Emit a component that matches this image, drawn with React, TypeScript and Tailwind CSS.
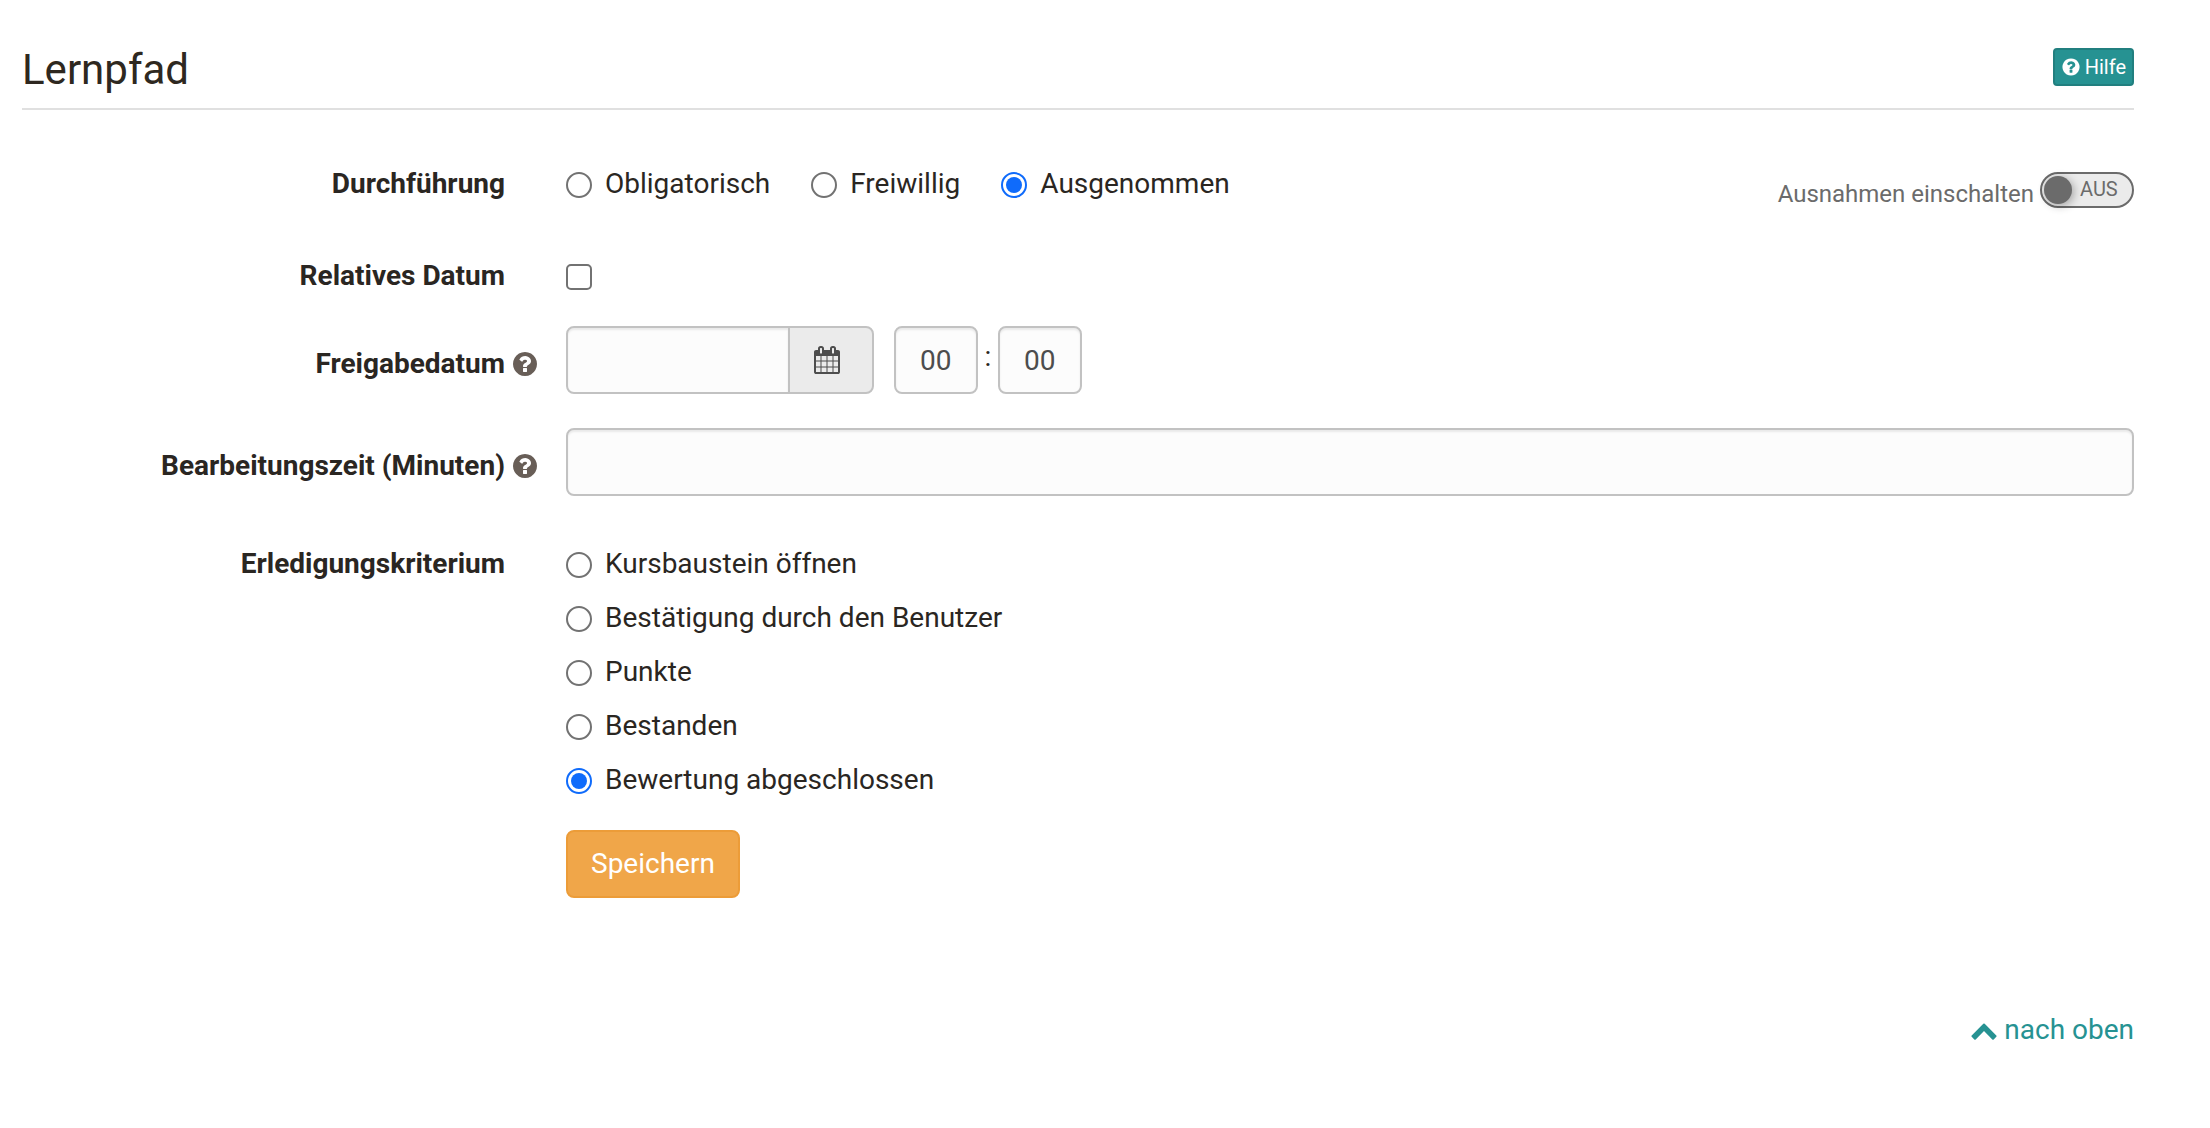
import { useState, type ReactNode } from "react";

const ICONS = {
  question:
    "M1024 1376v-192q0-14-9-23t-23-9h-192q-14 0-23 9t-9 23v192q0 14 9 23t23 9h192q14 0 23-9t9-23zm256-672q0-88-55.5-163t-138.5-116-170-41q-243 0-371 213-15 24 8 42l132 100q7 6 19 6 16 0 25-12 53-68 86-92 34-24 86-24 48 0 85.5 26t37.5 59q0 38-20 61t-68 45q-63 28-115.5 86.5t-52.5 125.5v36q0 14 9 23t23 9h192q14 0 23-9t9-23q0-19 21.5-49.5t54.5-49.5q32-18 49-28.5t46-35 44.500-48 28-60.500 12.500-81zm384 192q0 209-103 385.500t-279.500 279.500-385.500 103-385.500-103-279.500-279.500-103-385.500 103-385.500 279.500-279.500 385.500-103 385.500 103 279.500 279.500 103 385.500z",
  calendar:
    "M192 1664h288v-288h-288v288zm352 0h320v-288h-320v288zm-352-352h288v-320h-288v320zm352 0h320v-320h-320v320zm-352-384h288v-288h-288v288zm736 736h320v-288h-320v288zm-384-736h320v-288h-320v288zm768 736h288v-288h-288v288zm-384-352h320v-320h-320v320zm-352-864v-288q0-13-9.5-22.5t-22.5-9.5h-64q-13 0-22.500 9.500t-9.500 22.500v288q0 13 9.500 22.500t22.500 9.500h64q13 0 22.500-9.500t9.500-22.500zm736 864h288v-320h-288v320zm-384-384h320v-288h-320v288zm384 0h288v-288h-288v288zm32-480v-288q0-13-9.500-22.500t-22.500-9.500h-64q-13 0-22.500 9.500t-9.500 22.500v288q0 13 9.500 22.500t22.500 9.500h64q13 0 22.500-9.500t9.500-22.500zm384-64v1280q0 52-38 90t-90 38h-1408q-52 0-90-38t-38-90v-1280q0-52 38-90t90-38h128v-96q0-66 47-113t113-47h64q66 0 113 47t47 113v96h384v-96q0-66 47-113t113-47h64q66 0 113 47t47 113v96h128q52 0 90 38t38 90z",
  chevronUp:
    "M1683 1331l-166 165q-19 19-45 19t-45-19l-531-531-531 531q-19 19-45 19t-45-19l-166-165q-19-19-19-45.500t19-45.500l742-741q19-19 45-19t45 19l742 741q19 19 19 45.500t-19 45.500z",
};

function Icon({ name, className }: { name: keyof typeof ICONS; className: string }) {
  return (
    <svg viewBox="0 0 1792 1792" fill="currentColor" aria-hidden="true" className={className}>
      <path d={ICONS[name]} />
    </svg>
  );
}

const BOX =
  "h-[68px] rounded-lg border-2 border-[#c2c2c2] bg-[#fcfcfc] px-6 text-[#4d4d4d] shadow-[inset_0_2px_2px_rgba(0,0,0,0.075)] outline-none";

function Row({
  label,
  htmlFor,
  id,
  help,
  offset = "",
  className = "",
  children,
}: {
  label: string;
  htmlFor?: string;
  id?: string;
  help?: boolean;
  offset?: string;
  className?: string;
  children: ReactNode;
}) {
  return (
    <div className={`grid grid-cols-[483fr_61px_1568fr] items-start ${className}`}>
      <div className={`text-right font-bold ${offset}`}>
        {htmlFor ? <label htmlFor={htmlFor}>{label}</label> : <span id={id}>{label}</span>}
      </div>
      <div className={`flex h-10 items-center pl-1.5 ${offset}`}>
        {help && (
          <button type="button" aria-label={`Hilfe zu ${label}`} className="text-[#685e57]">
            <Icon name="question" className="size-7" />
          </button>
        )}
      </div>
      {children}
    </div>
  );
}

function Radio({
  name,
  label,
  checked,
  onSelect,
}: {
  name: string;
  label: string;
  checked: boolean;
  onSelect: () => void;
}) {
  return (
    <label className="flex items-center gap-[13px]">
      <input
        type="radio"
        name={name}
        checked={checked}
        onChange={onSelect}
        className="mt-0.5 size-[26px] shrink-0 appearance-none rounded-full border-2 border-[#727272] bg-white p-[3px] checked:border-[#0f6bfb] checked:bg-[#0f6bfb] checked:bg-clip-content"
      />
      {label}
    </label>
  );
}

const EXECUTION = ["Obligatorisch", "Freiwillig", "Ausgenommen"];
const CRITERIA = [
  "Kursbaustein öffnen",
  "Bestätigung durch den Benutzer",
  "Punkte",
  "Bestanden",
  "Bewertung abgeschlossen",
];

export default function App() {
  const [execution, setExecution] = useState("Ausgenommen");
  const [criterion, setCriterion] = useState("Bewertung abgeschlossen");
  const [exceptions, setExceptions] = useState(false);

  return (
    <main className="min-h-screen bg-white pr-[76px] pl-[22px] font-['Roboto',sans-serif] text-[28px] leading-10 text-[#2a2622]">
      <header className="flex items-start justify-between border-b-2 border-[#e0e0e0] pt-12 pb-4">
        <h1 className="text-[42px] leading-11 text-[#2e2820]">Lernpfad</h1>
        <button
          type="button"
          className="flex h-[38px] items-center gap-1 rounded border-2 border-[#217f7f] bg-[#269292] px-1.5 text-xl leading-7 text-white"
        >
          <Icon name="question" className="size-5" />
          Hilfe
        </button>
      </header>

      <form className="pt-[54px]" onSubmit={(e) => e.preventDefault()}>
        <Row label="Durchführung" id="execution">
          <div className="flex items-start justify-between">
            <div role="radiogroup" aria-labelledby="execution" className="flex gap-[41px]">
              {EXECUTION.map((o) => (
                <Radio
                  key={o}
                  name="execution"
                  label={o}
                  checked={execution === o}
                  onSelect={() => setExecution(o)}
                />
              ))}
            </div>
            <div className="flex items-start gap-[6px] pt-2 text-2xl text-[#6b6b6b]">
              <label htmlFor="exceptions" className="pt-1 leading-9">
                Ausnahmen einschalten
              </label>
              <button
                id="exceptions"
                type="button"
                role="switch"
                aria-checked={exceptions}
                onClick={() => setExceptions(!exceptions)}
                className="flex h-9 w-[94px] items-center gap-2 rounded-full border-2 border-[#6b6b6b] bg-[#ebebeb] pl-0.5 text-xl leading-7"
              >
                <span className="size-7 rounded-full bg-[#6b6b6b] shadow-[2px_2px_8px_rgba(0,0,0,0.3)]" />
                <span className="pb-0.5">{exceptions ? "EIN" : "AUS"}</span>
              </button>
            </div>
          </div>
        </Row>

        <Row label="Relatives Datum" htmlFor="relative" className="mt-11">
          <div className="flex h-10 items-center">
            <input
              id="relative"
              type="checkbox"
              className="mt-0.5 size-[26px] appearance-none rounded-[5px] border-2 border-[#727272] bg-white checked:bg-[#0f6bfb]"
            />
          </div>
        </Row>

        <Row label="Freigabedatum" htmlFor="release" help offset="mt-[18px]" className="mt-[30px]">
          <div className="flex">
            <input id="release" type="text" className={`w-[224px] rounded-r-none ${BOX}`} />
            <button
              type="button"
              aria-label="Datum wählen"
              className="-ml-0.5 flex h-[68px] w-[86px] items-center rounded-r-lg border-2 border-[#c2c2c2] bg-[#ebebeb] pl-[23px] text-[#4d4d4d]"
            >
              <Icon name="calendar" className="size-7" />
            </button>
            <input aria-label="Stunde" type="text" defaultValue="00" className={`ml-5 w-[84px] ${BOX}`} />
            <span className="w-5 pt-[11px] text-center">:</span>
            <input aria-label="Minute" type="text" defaultValue="00" className={`w-[84px] ${BOX}`} />
          </div>
        </Row>

        <Row
          label="Bearbeitungszeit (Minuten)"
          htmlFor="duration"
          help
          offset="mt-[18px]"
          className="mt-[34px]"
        >
          <input id="duration" type="text" className={`w-full ${BOX}`} />
        </Row>

        <Row label="Erledigungskriterium" id="criterion" className="mt-12">
          <div className="flex flex-col items-start gap-[30px]">
            <div role="radiogroup" aria-labelledby="criterion" className="flex flex-col gap-[14px]">
              {CRITERIA.map((o) => (
                <Radio
                  key={o}
                  name="criterion"
                  label={o}
                  checked={criterion === o}
                  onSelect={() => setCriterion(o)}
                />
              ))}
            </div>
            <button
              type="submit"
              className="h-[68px] rounded-lg border-2 border-[#ec9c38] bg-[#f0a649] px-[23px] text-white"
            >
              Speichern
            </button>
          </div>
        </Row>
      </form>

      <footer className="flex justify-end pt-28 pb-[78px]">
        <a href="#top" className="flex items-center gap-1.5 text-[#269292]">
          <Icon name="chevronUp" className="size-7" />
          nach oben
        </a>
      </footer>
    </main>
  );
}
